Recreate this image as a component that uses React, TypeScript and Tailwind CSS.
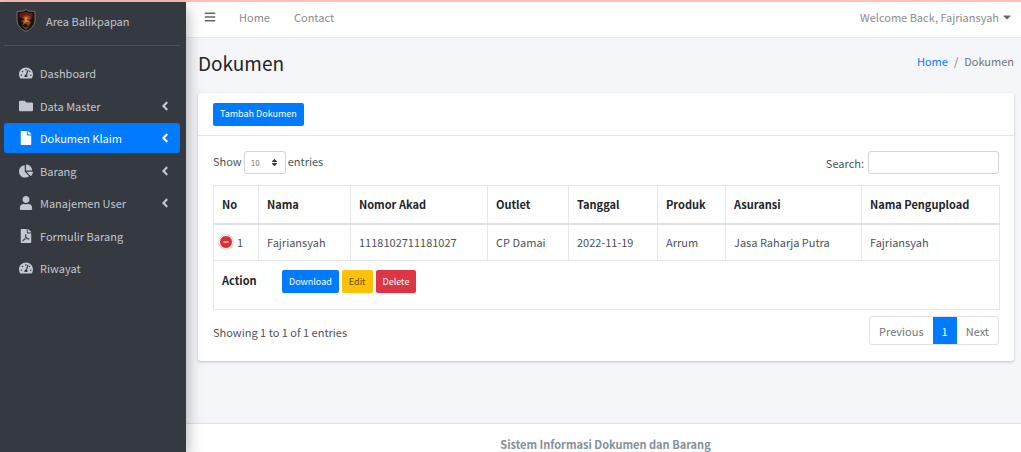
import { useState } from "react";
import type { ReactNode } from "react";
import type { IconType } from "react-icons";
import {
  FaAngleLeft,
  FaBars,
  FaCaretDown,
  FaChartPie,
  FaFile,
  FaFilePdf,
  FaFolder,
  FaMinus,
  FaSort,
  FaTachometerAlt,
  FaUser,
} from "react-icons/fa";

type NavItem = { label: string; icon: IconType; expandable?: boolean; active?: boolean };

const navItems: NavItem[] = [
  { label: "Dashboard", icon: FaTachometerAlt },
  { label: "Data Master", icon: FaFolder, expandable: true },
  { label: "Dokumen Klaim", icon: FaFile, expandable: true, active: true },
  { label: "Barang", icon: FaChartPie, expandable: true },
  { label: "Manajemen User", icon: FaUser, expandable: true },
  { label: "Formulir Barang", icon: FaFilePdf },
  { label: "Riwayat", icon: FaTachometerAlt },
];

const columns = [
  { title: "No", width: "w-[45px]" },
  { title: "Nama", width: "w-[92px]" },
  { title: "Nomor Akad", width: "w-[137px]" },
  { title: "Outlet", width: "w-[81px]" },
  { title: "Tanggal", width: "w-[89px]" },
  { title: "Produk", width: "w-[68px]" },
  { title: "Asuransi", width: "w-[136px]" },
  { title: "Nama Pengupload", width: "w-[138px]" },
];

const row = ["Fajriansyah", "1118102711181027", "CP Damai", "2022-11-19", "Arrum", "Jasa Raharja Putra", "Fajriansyah"];

function Crest() {
  return (
    <svg viewBox="0 0 40 46" className="h-[23px] w-5 shrink-0" aria-hidden="true">
      <path d="M20 1 25 4 38 5 38 24Q36 38 20 45 4 38 2 24L2 5 15 4Z" fill="#17130f" stroke="#73706a" strokeWidth="2" />
      <path d="M20 6 33 9 33 18 25 17 20 12 13 18 7 17 7 9Z" fill="#6b1c14" />
      <path d="M12 17 19 12 27 14 31 20 26 22 30 27 24 34 20 29 12 33 15 26 9 24 17 21Z" fill="#9c4519" />
      <path d="M17 16 24 17 21 22 26 26 19 26 14 29 18 23Z" fill="#d08a35" />
      <path d="M11 33 20 37 29 32 20 42Z" fill="#5a4c26" />
    </svg>
  );
}

function Sidebar() {
  return (
    <aside className="z-10 w-[186px] shrink-0 bg-[#343a40] px-1 text-[#c2c7d0] shadow-[0_6px_16px_rgba(0,0,0,0.35)]">
      <a href="#" className="mr-[2px] flex h-[44px] items-center gap-[10px] border-b border-[#4b545c] pr-2 pb-[6px] pl-3">
        <Crest />
        <span>Area Balikpapan</span>
      </a>
      <nav className="mt-3 mr-[2px] flex h-[225px] flex-col justify-between">
        {navItems.map(({ label, icon: Icon, expandable, active }) => (
          <a
            key={label}
            href="#"
            className={
              active
                ? "flex h-[30px] items-center rounded-[3px] bg-[#007bff] pr-2 pl-[14px] text-white"
                : "flex h-[30px] items-center rounded-[3px] pr-2 pl-[14px]"
            }
          >
            <span className="flex w-4 justify-center">
              <Icon className="size-[14px]" />
            </span>
            <span className="ml-[6px] flex-1">{label}</span>
            {expandable && <FaAngleLeft className="size-[14px]" />}
          </a>
        ))}
      </nav>
    </aside>
  );
}

function SmallButton({ className, children }: { className: string; children: ReactNode }) {
  return (
    <button type="button" className={`h-[23px] rounded-[2px] px-[7px] text-[9px] leading-4 ${className}`}>
      {children}
    </button>
  );
}

function DocumentTable() {
  return (
    <table className="w-full table-fixed border-collapse border border-[#e3e6ea] text-left">
      <colgroup>
        {columns.map((c) => (
          <col key={c.title} className={c.width} />
        ))}
      </colgroup>
      <thead>
        <tr className="h-[38px] border-b-2 border-[#dee2e6]">
          {columns.map((c) => (
            <th key={c.title} className="border-x border-[#e3e6ea] px-2 font-bold whitespace-nowrap">
              {c.title}
            </th>
          ))}
        </tr>
      </thead>
      <tbody>
        <tr className="h-[37px] border-b border-[#e3e6ea] text-[#4d5359]">
          <td className="border-x border-[#e3e6ea] pl-[5px]">
            <div className="flex items-center gap-1">
              <button
                type="button"
                aria-label="Collapse row"
                className="flex size-[14px] items-center justify-center rounded-full border border-white bg-[#d33333] text-white shadow-[0_0_2px_#888]"
              >
                <FaMinus className="size-[6px]" />
              </button>
              <span>1</span>
            </div>
          </td>
          {row.map((value, i) => (
            <td key={i} className="border-x border-[#e3e6ea] px-2 whitespace-nowrap">
              {value}
            </td>
          ))}
        </tr>
        <tr className="h-[49px]">
          <td colSpan={columns.length} className="px-2 pt-[9px] align-top">
            <div className="flex items-start">
              <span className="w-[60px] pt-[2px] font-bold">Action</span>
              <div className="flex gap-[3px]">
                <SmallButton className="bg-[#007bff] text-white">Download</SmallButton>
                <SmallButton className="bg-[#ffc107] text-[#5c4a14]">Edit</SmallButton>
                <SmallButton className="bg-[#dc3545] text-white">Delete</SmallButton>
              </div>
            </div>
          </td>
        </tr>
      </tbody>
    </table>
  );
}

export default function App() {
  const [search, setSearch] = useState("");
  return (
    <div className="flex min-h-screen flex-col bg-white font-['Noto_Sans_CJK_SC','Noto_Sans',sans-serif] text-[11px] leading-4 text-[#212529]">
      <div className="h-[2px] bg-[#ffc1b5]" />
      <div className="flex flex-1">
        <Sidebar />
        <div className="flex min-w-0 flex-1 flex-col bg-[#f4f6f9]">
          <header className="flex h-9 items-center border-b border-[#e6e9ed] bg-white pr-2 pb-[6px] pl-[18px] text-[#8c8c8c]">
            <button type="button" aria-label="Toggle menu" className="text-[#666]">
              <FaBars className="size-3" />
            </button>
            <nav className="ml-[23px] flex flex-1 gap-6">
              <a href="#">Home</a>
              <a href="#">Contact</a>
            </nav>
            <button type="button" className="flex items-center gap-[2px]">
              Welcome Back, Fajriansyah
              <FaCaretDown className="size-3 text-[#666]" />
            </button>
          </header>

          <main className="flex-1 pr-[7px] pl-3">
            <div className="flex h-[55px] items-center justify-between pb-[6px]">
              <h1 className="text-[19px] leading-6">Dokumen</h1>
              <nav aria-label="Breadcrumb" className="flex gap-[6px] pb-[3px] text-[#6c757d]">
                <a href="#" className="text-[#007bff]">Home</a>
                <span>/</span>
                <span>Dokumen</span>
              </nav>
            </div>

            <section className="rounded-[3px] bg-white shadow-[0_1px_3px_rgba(0,0,0,0.22)]">
              <div className="flex h-[43px] items-center border-b border-[#e3e5e8] px-[15px]">
                <SmallButton className="bg-[#007bff] text-white">Tambah Dokumen</SmallButton>
              </div>
              <div className="px-[15px] pt-[15px] pb-4">
                <div className="mb-[11px] flex items-center justify-between text-[#4d5359]">
                  <label className="flex items-center gap-[2px]">
                    <span className="pb-[3px]">Show</span>
                    <span className="relative flex">
                      <select className="h-[23px] w-[42px] appearance-none rounded-[3px] border border-[#ced4da] bg-white pl-[6px] text-[8px] text-[#6c757d]">
                        <option>10</option>
                        <option>25</option>
                        <option>50</option>
                      </select>
                      <FaSort className="pointer-events-none absolute top-[7px] right-[7px] size-[9px] text-[#343a40]" />
                    </span>
                    <span className="pb-[3px]">entries</span>
                  </label>
                  <label className="flex items-center gap-1">
                    Search:
                    <input
                      type="search"
                      value={search}
                      onChange={(e) => setSearch(e.target.value)}
                      className="h-[23px] w-[131px] rounded-[3px] border border-[#ced4da] bg-white px-2"
                    />
                  </label>
                </div>
                <DocumentTable />
                <div className="mt-[6px] flex items-center justify-between">
                  <p className="pt-[3px] text-[#4d5359]">Showing 1 to 1 of 1 entries</p>
                  <nav aria-label="Pagination" className="flex h-[29px] overflow-hidden rounded-[3px] border border-[#dee2e6] text-[#6c757d]">
                    <button type="button" className="px-[9px]">Previous</button>
                    <button type="button" className="bg-[#007bff] px-[9px] text-white">1</button>
                    <button type="button" className="px-[9px]">Next</button>
                  </nav>
                </div>
              </div>
            </section>
          </main>

          <footer className="border-t border-[#dee2e6] bg-white pt-3 pl-1 text-center font-bold text-[#869099]">
            Sistem Informasi Dokumen dan Barang
          </footer>
        </div>
      </div>
    </div>
  );
}
